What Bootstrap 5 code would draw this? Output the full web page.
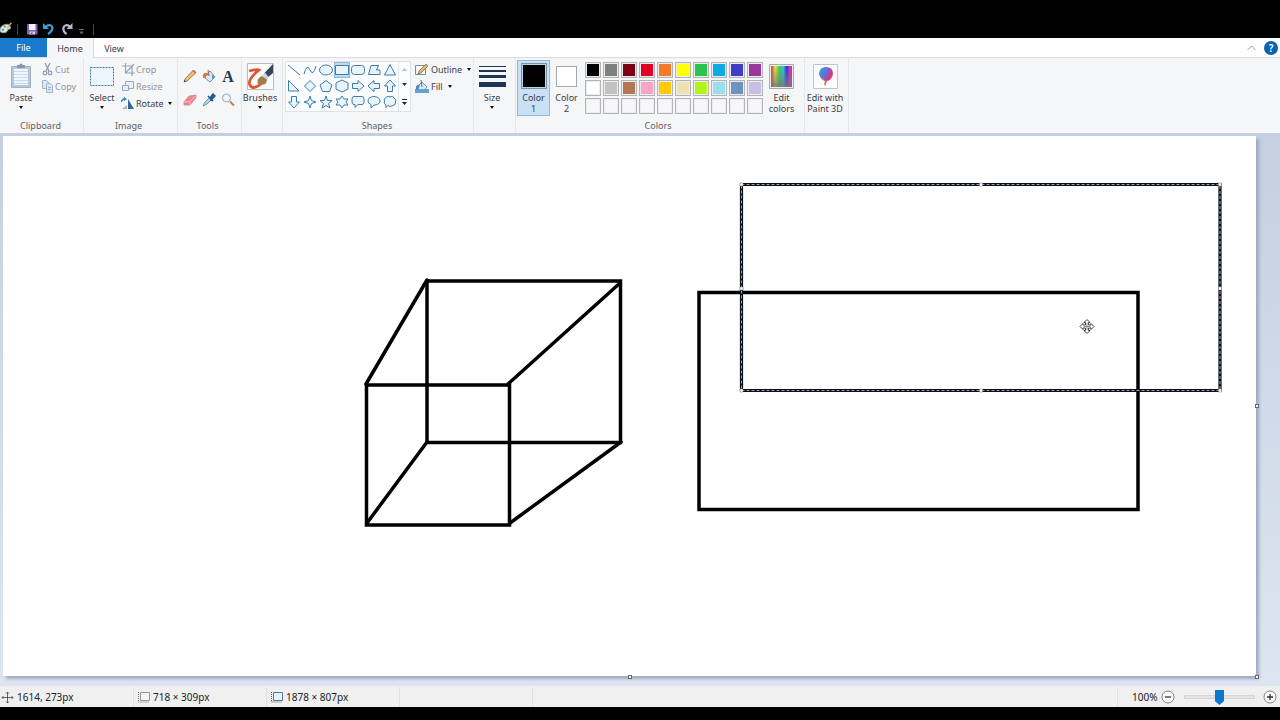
<!DOCTYPE html>
<html lang="en">
<head>
<meta charset="utf-8">
<meta name="viewport" content="width=device-width, initial-scale=1">
<title>Paint</title>
<link href="https://cdn.jsdelivr.net/npm/bootstrap@5.3.0/dist/css/bootstrap.min.css" rel="stylesheet">
<style>
  body { background: #000; font-family: "Noto Sans", "Open Sans", sans-serif; font-size: 9px; line-height: 11px; color: #3c3c44; }
  svg { display: block; flex: none; }
  button { border: 0; background: none; padding: 0; color: inherit; }
  .titlebar { height: 38px; padding-bottom: 3px; gap: 4px; }
  .titlebar .divider { width: 1px; height: 11px; background: #4a4a4a; }
  .titlebar .divider-first { margin-right: 4px; }
  .tabs { height: 20px; background: #fff; border-bottom: 1px solid #dadbdc; }
  .tabs .tab { color: #3c3c44; text-decoration: none; display: flex; align-items: center; justify-content: center; width: 47px; height: 20px; }
  .tabs .tab-file { background: #1979ca; color: #fff; height: 19px; }
  .tabs .tab-home { background: #f5f6f7; border-right: 1px solid #dadbdc; }
  .tabs .tab-view { width: 40px; }
  .tabs-end { padding-right: 2px; }
  .help { width: 14px; height: 14px; border-radius: 50%; background: #0a63b1; color: #fff; font-size: 10px; font-weight: 600; line-height: 14px; }
  .ribbon { background: #f5f6f8; min-height: 75px; }
  .tool-group { border-right: 1px solid #e6e7ea; display: flex; flex-direction: column; flex: none; padding-top: 2px; }
  .group-body { display: flex; height: 59px; }
  .group-title { text-align: center; color: #5f6068; line-height: 14px; padding-right: 2px; }
  .w-clip { width: 84px; } .w-image { width: 94px; } .w-tools { width: 64px; } .w-brush { width: 41px; }
  .w-shapes { width: 191px; } .w-size { width: 42px; } .w-colors { width: 289px; } .w-three { width: 44px; }
  .big { width: 36px; height: 56px; display: flex; flex-direction: column; align-items: center; padding-top: 2px; white-space: nowrap; }
  .w-clip .big { width: 42px; } .w-three .big { width: 40px; }
  .big .pic { height: 28px; display: flex; align-items: center; justify-content: center; margin-bottom: 2px; }
  .caret { display: inline-block; border: 2px solid transparent; border-top: 3px solid #111; border-bottom: 0; }
  .big .caret { margin-top: 3px; }
  .minors { padding-top: 1px; padding-left: 1px; }
  .minor { display: flex; align-items: center; gap: 1px; height: 17px; white-space: nowrap; }
  .minor .caret { margin-left: 3px; }
  .w-clip .minor { gap: 2px; } .w-shapes .minor { gap: 2px; }
  .off { color: #93949c; }
  .tool-grid { display: grid; grid-template-columns: repeat(3, 19px); grid-auto-rows: 24px; place-items: center; padding: 4px 2px; }
  .gallery { border: 1px solid #dfe2e6; background: #fbfcfd; height: 51px; margin: 1px 0 0 2px; }
  .shape-grid { display: grid; grid-template-columns: repeat(7, 16px); grid-auto-rows: 16px; }
  .shape-grid button { display: grid; place-items: center; }
  .shape-grid .picked { background: #bcdcf4; box-shadow: inset 0 0 0 1px #8ab8e0; }
  .shape-grid svg { fill: #eaf5fb; stroke: #3e7ca8; stroke-width: 1; }
  .shape-grid svg .open-shape { fill: none; }
  .scroller { width: 12px; border-left: 1px solid #e3e5e9; display: flex; flex-direction: column; justify-content: space-around; align-items: center; }
  .w-colors .color-btn { width: 33px; }
  .first-color { margin-left: 1px; }
  .active-color { background: #c9e0f5; box-shadow: inset 0 0 0 1px #8fb8dd; }
  .chip { border: 1px solid #a5a8ad; box-shadow: inset 0 0 0 1px #fff; background: #fff; }
  .chip-one { width: 26px; height: 26px; background: #000; box-shadow: inset 0 0 0 1px #b9d3ea; border-color: #7d8fa3; }
  .chip-two { width: 21px; height: 21px; }
  .palette { display: grid; grid-template-columns: repeat(10, 16px); grid-auto-rows: 16px; gap: 2px; padding: 2px 0 0 2px; align-content: start; width: 182px; }
  .palette button { border: 1px solid #b3b4b7; box-shadow: inset 0 0 0 1px #ececef; }
  .workspace { background: linear-gradient(#c5cfdf, #dde5f1); padding: 3px 24px 10px 3px; }
  .sheet { position: relative; background: #fff; box-shadow: 3px 3px 3px #9dabc0; }
  .sheet svg { width: 100%; height: auto; }
  .grip { position: absolute; width: 4px; height: 4px; border: 1px solid #666; background: #fff; }
  .grip-e { right: -3px; top: calc(50% - 2px); } .grip-s { left: calc(50% - 2px); bottom: -3px; } .grip-se { right: -3px; bottom: -3px; }
  .status { min-height: 21px; background: #f0f0f0; color: #222; font-size: 10px; padding-top: 1px; }
  .cell-info { width: 133px; height: 20px; border-right: 1px solid #e0e0e2; display: flex; align-items: center; gap: 3px; padding-left: 4px; flex: none; white-space: nowrap; }
  .cell-pos { width: 134px; padding-left: 1px; }
  .zoom { width: 163px; height: 20px; border-left: 1px solid #e0e0e2; padding-left: 14px; padding-right: 3px; }
  .zoom input { appearance: none; width: 71px; height: 16px; background: none; margin: 0 8px 0 9px; }
  .zoom input::-webkit-slider-runnable-track { height: 4px; background: #e4e4e6; border: 1px solid #d5d5d8; }
  .zoom input::-webkit-slider-thumb { appearance: none; width: 9px; height: 15px; margin-top: -6px; background: #0a78cc; clip-path: polygon(0 0, 100% 0, 100% 75%, 50% 100%, 0 75%); }
</style>
</head>
<body>
<div class="d-flex flex-column min-vh-100">
  <header class="titlebar d-flex align-items-end">
    <svg width="13" height="14" viewBox="0 0 14 14"><path d="M0 8Q2 3 8 3Q12 4 11 8Q8 8 8 10Q7 13 3 12Q-1 12 0 8Z" fill="#d9e6dc" stroke="#8a9c93"/><circle cx="3" cy="9" r="1.2" fill="#578ac0"/><circle cx="5" cy="5.500" r="1.200" fill="#61a75a"/><circle cx="8" cy="6" r="1.200" fill="#e4e07b"/><path d="M7 9L11 1l2 1Z" fill="#d29b57"/></svg>
    <span class="divider divider-first"></span>
    <button aria-label="Save"><svg width="12" height="12" viewBox="0 0 12 12"><path d="M1 1H11.500V11.500H1Z" fill="#7c5faf"/><path d="M3 1h6.500v6H3Z" fill="#f4f1fa"/><path d="M3.500 8.500h5.500v3H3.500Z" fill="#d5cae6"/><path d="M5 9.500h1.500v2H5Z" fill="#66489c"/></svg></button>
    <button aria-label="Undo"><svg width="14" height="13" viewBox="0 0 14 13"><path d="M4 4.500Q9 1.500 10.500 5.500Q10.500 9 6 12" fill="none" stroke="#39a0dc" stroke-width="2.200"/><path d="M1 1V7H7Z" fill="#39a0dc"/></svg></button>
    <button aria-label="Redo"><svg width="14" height="13" viewBox="0 0 14 13"><path d="M10 4.500Q5 1.500 3.500 5.500Q2.500 9 6.500 12" fill="none" stroke="#b9b9cd" stroke-width="2.200"/><path d="M12.500 1V7H6.500Z" fill="#b9b9cd"/></svg></button>
    <button aria-label="Customize toolbar"><svg width="7" height="10" viewBox="1 0 7 10"><path d="M2 4.500h5M3 7l1.500 2L6 7Z" stroke="#777" fill="none"/></svg></button>
    <span class="divider ms-1"></span>
  </header>

  <nav class="tabs d-flex">
    <a href="#" class="tab tab-file">File</a>
    <a href="#" class="tab tab-home">Home</a>
    <a href="#" class="tab tab-view">View</a>
    <div class="tabs-end ms-auto d-flex align-items-center">
      <button class="me-2" aria-label="Collapse ribbon"><svg width="9" height="6" viewBox="0 0 9 6"><path d="M.5 5L4.500 1L8.500 5" fill="none" stroke="#999"/></svg></button>
      <button class="help" aria-label="Help">?</button>
    </div>
  </nav>

  <main class="ribbon d-flex">
    <section class="tool-group w-clip">
      <div class="group-body">
        <button class="big"><span class="pic"><svg width="22" height="26" viewBox="0 0 22 26"><path d="M1.500 3.500h19v21h-19Z" fill="#b9c6d8" stroke="#a1b1c8"/><path d="M4 6h14v16H4Z" fill="#f1f6fc"/><path d="M4 8.500h14M4 11.500h14M4 14.500h14M4 17.500h14M4 20.500h14" stroke="#c9d8eb"/><path d="M7 2h2q2-3 4 0h2v3H7Z" fill="#8898ad"/></svg></span>Paste<span class="caret"></span></button>
        <div class="minors ps-0">
          <button class="minor off" disabled><svg width="11" height="13" viewBox="1 0 11 13"><g fill="none" stroke="#929caf" stroke-width="1.300"><path d="M4 0L8 8M9 0L5 8"/><circle cx="4" cy="10" r="1.800"/><circle cx="9" cy="10" r="1.800"/></g></svg>Cut</button>
          <button class="minor off" disabled><svg width="11" height="13" viewBox="1 0 11 13"><g fill="#dce6f2" stroke="#a3b4cb"><path d="M1.500 .5h4l2 2v6h-6Z"/><path d="M5.500 3.500h4l2 2v7h-6Z"/><path d="M7 7.500h3M7 9.500h3"/></g></svg>Copy</button>
        </div>
      </div>
      <div class="group-title">Clipboard</div>
    </section>

    <section class="tool-group w-image">
      <div class="group-body">
        <button class="big"><span class="pic"><svg width="24" height="19" viewBox="0 0 24 19"><path d="M.5 .5h23v18H.5Z" fill="#edf5fc" stroke="#3b7ca9" stroke-dasharray="2 1"/></svg></span>Select<span class="caret"></span></button>
        <div class="minors">
          <button class="minor off" disabled><svg width="14" height="13" viewBox="0 0 14 13"><path d="M4.500 0V10H14M1 3h10v10M4.500 10L13 1" fill="none" stroke="#94a4b9" stroke-width="1.200"/></svg>Crop</button>
          <button class="minor off" disabled><svg width="14" height="13" viewBox="0 0 14 13"><g fill="#e8eff7" stroke="#94a9c1"><path d="M4.500 1.500h8v7h-8Z"/><path d="M1.500 5.500h6v5h-6Z"/></g></svg>Resize</button>
          <button class="minor"><svg width="14" height="13" viewBox="0 0 14 13"><path d="M1 12L6 8V12Z" fill="#a7b3bf"/><path d="M7 12V2l6 10Z" fill="#346997"/><path d="M0 5Q1 2 4 2" fill="none" stroke="#2688cc" stroke-width="1.300"/><path d="M3 0l3 2-3 2Z" fill="#2688cc"/></svg>Rotate<span class="caret"></span></button>
        </div>
      </div>
      <div class="group-title pe-1">Image</div>
    </section>

    <section class="tool-group w-tools">
      <div class="group-body"><div class="tool-grid">
        <button aria-label="Pencil"><svg width="14" height="14" viewBox="0 0 14 14"><path d="M1 13L2 10L10.500 1L13 3.500L4 12Z" fill="#edc66c" stroke="#7d6340" stroke-width=".8"/><path d="M9.500 2l2.500 2.500 1-1-2.500-2.500Z" fill="#c86b61"/><path d="M1 13l.5-2L3 12.500Z" fill="#333"/></svg></button>
        <button aria-label="Fill with color"><svg width="14" height="14" viewBox="0 0 14 14"><path d="M4 6L8 2L13 8L8 13L3 9Z" fill="#dce9f1" stroke="#7891a4"/><path d="M7 7L6 1" stroke="#607384"/><path d="M1 9Q0 3 6 4L8 6Q3 6 3 9Z" fill="#d8743b"/><path d="M10 5l3 3-3 3Z" fill="#6497bb"/></svg></button>
        <button aria-label="Text"><svg width="14" height="14" viewBox="0 0 14 14"><text x="7" y="12.500" text-anchor="middle" font-family="Liberation Serif, serif" font-size="16" font-weight="bold" fill="#24384f">A</text></svg></button>
        <button aria-label="Eraser"><svg width="14" height="13" viewBox="0 0 14 13"><path d="M1 8L6 2L13 1L13 4L7 11L1 11Z" fill="#e88690" stroke="#c7818a" stroke-width=".7"/><path d="M1 8l6-.5 6-6M7 8v3" stroke="#fac0c2" fill="none"/></svg></button>
        <button aria-label="Color picker"><svg width="14" height="14" viewBox="0 0 14 14"><path d="M1 13L3 9L8 4L10 6L5 11Z" fill="#b4d6e6" stroke="#57819e" stroke-width=".8"/><path d="M6 3l5 5M8 5l3-4 2 2-4 4Z" fill="#296292" stroke="#235680" stroke-width="1.500"/></svg></button>
        <button aria-label="Magnifier"><svg width="14" height="14" viewBox="0 0 14 14"><circle cx="5.500" cy="5" r="4" fill="#edf6fd" stroke="#94a8bb"/><path d="M9 8.500l4 4" stroke="#bd884e" stroke-width="2"/></svg></button>
      </div></div>
      <div class="group-title pe-1">Tools</div>
    </section>

    <section class="tool-group w-brush">
      <div class="group-body"><button class="big"><span class="pic"><svg width="27" height="27" viewBox="0 0 27 27"><path d="M.5 .5h26v26H.5Z" fill="#fafcfd" stroke="#b5bac0"/><path d="M2 8Q10 6 12 7Q1 16 2.500 21Q5 28 14 21" fill="none" stroke="#dc572f" stroke-width="2.800"/><path d="M11 21Q9 16 14.500 13L20 16Q20 24 11 21Z" fill="#a87949"/><path d="M17 10.500L26 1v9l-6 5Z" fill="#34465b"/><path d="M15 12.500l3-3 4 5-2 2Z" fill="#cad5df"/></svg></span>Brushes<span class="caret"></span></button></div>
    </section>

    <section class="tool-group w-shapes">
      <div class="group-body">
        <div class="gallery d-flex">
          <div class="shape-grid" id="shapes"></div>
          <div class="scroller">
            <button aria-label="Scroll up"><svg width="5" height="3" viewBox="0 0 5 3"><path d="M0 3L2.500 0L5 3Z" fill="#bbb"/></svg></button>
            <button aria-label="Scroll down"><svg width="5" height="3" viewBox="0 0 5 3"><path d="M0 0H5L2.500 3Z" fill="#333"/></svg></button>
            <button aria-label="More shapes"><svg width="5" height="6" viewBox="0 0 5 6"><path d="M0 0H5V1H0ZM0 3H5L2.500 6Z" fill="#222"/></svg></button>
          </div>
        </div>
        <div class="minors ps-1">
          <button class="minor"><svg width="14" height="13" viewBox="0 0 14 13"><path d="M.5 2.500h10v9H.5Z" fill="#f8fbff" stroke="#7590a5"/><path d="M3 11l1-3 7-7 2 2-7 7Z" fill="#e5b75f" stroke="#80613b" stroke-width=".7"/></svg>Outline<span class="caret"></span></button>
          <button class="minor"><svg width="14" height="13" viewBox="0 0 14 13"><path d="M3 6L7 2l5 5-4 5-5-2Z" fill="#dce8f1" stroke="#718ca3"/><path d="M7 7L6 0" stroke="#667"/><path d="M0 9h14v4H0Z" fill="#60a3d7"/><path d="M1 10Q0 4 5 5L3 10Z" fill="#4a8fc1"/></svg>Fill<span class="caret"></span></button>
        </div>
      </div>
      <div class="group-title">Shapes</div>
    </section>

    <section class="tool-group w-size">
      <div class="group-body"><button class="big"><span class="pic"><svg width="27" height="23" viewBox="0 0 27 23"><path d="M0 1h27v1H0ZM0 5h27v2H0ZM0 10h27v3H0ZM0 17h27v5H0Z" fill="#1c3654"/></svg></span>Size<span class="caret"></span></button></div>
    </section>

    <section class="tool-group w-colors">
      <div class="group-body">
        <button class="big color-btn first-color active-color"><span class="pic"><span class="chip chip-one"></span></span><span>Color</span><span>1</span></button>
        <button class="big color-btn"><span class="pic"><span class="chip chip-two"></span></span><span>Color</span><span>2</span></button>
        <div class="palette" id="palette"></div>
        <button class="big color-btn"><span class="pic"><svg width="25" height="25" viewBox="0 0 25 25"><defs><linearGradient id="hue"><stop stop-color="#e93232"/><stop offset=".2" stop-color="#e8e83c"/><stop offset=".4" stop-color="#35d450"/><stop offset=".58" stop-color="#2bcbe2"/><stop offset=".75" stop-color="#3727dd"/><stop offset=".9" stop-color="#df2bdc"/><stop offset="1" stop-color="#df304c"/></linearGradient><linearGradient id="fade" x2="0" y2="1"><stop stop-color="#777" stop-opacity="0"/><stop offset="1" stop-color="#777" stop-opacity=".85"/></linearGradient></defs><path d="M.5 .5h24v24H.5Z" fill="#eee" stroke="#aaa"/><path d="M2 2h21v21H2Z" fill="url(#hue)"/><path d="M2 2h21v21H2Z" fill="url(#fade)"/></svg></span><span>Edit</span><span>colors</span></button>
      </div>
      <div class="group-title pe-1">Colors</div>
    </section>

    <section class="tool-group w-three">
      <div class="group-body"><button class="big"><span class="pic"><svg width="25" height="25" viewBox="0 0 25 25"><defs><linearGradient id="drop" x1="0" x2="1" y1=".2" y2=".8"><stop stop-color="#17a9ec"/><stop offset=".45" stop-color="#7763d6"/><stop offset=".75" stop-color="#d93576"/><stop offset="1" stop-color="#f19a31"/></linearGradient></defs><path d="M.5 .5h24v24H.5Z" fill="#fcfcfd" stroke="#c2c4c9"/><path d="M13 3Q20 3 20 10Q19 16 14 17L12 22Q11 20 12 17Q6 14 6 9Q7 3 13 3Z" fill="url(#drop)"/><path d="M8 14Q11 14 12 17L14 16L12 22Q11 20 12 17Q9 16 8 14Z" fill="#ee7b32"/></svg></span><span>Edit with</span><span>Paint 3D</span></button></div>
    </section>
  </main>

  <div class="workspace">
    <div class="sheet">
      <svg viewBox="3 136 1253 540" role="img" aria-label="Drawing of a cube and two rectangles">
        <g fill="none" stroke="#000" stroke-width="3.500" stroke-linecap="round">
          <path d="M427 281H620.500V442.500H427ZM366.500 385H509.500V525H366.500Z"/>
          <path d="M427 280L366 384M620 283L508 384M427 442L367 523M621 442L510 523"/>
          <path d="M699 292.500H1138V509.500H699Z"/>
          <path d="M741.500 184.500H1220V390.500H741.500Z" stroke-width="3.200" stroke="#0a1018"/>
        </g>
        <path d="M741.500 184.500H1220V390.500H741.500Z" fill="none" stroke="#98a2a8" stroke-dasharray="3 2"/>
        <path d="M740 183h3v3h-3ZM979.500 183h3v3h-3ZM1218.500 183h3v3h-3ZM740 287h3v3h-3ZM1218.500 287h3v3h-3ZM740 389h3v3h-3ZM979.500 389h3v3h-3ZM1218.500 389h3v3h-3Z" fill="#fff" stroke="#777" stroke-width=".5"/>
        <path d="M1087 319.500l3 3h-1.500v2.500h2.500v-1.500l3 3-3 3v-1.500h-2.500v2.500h1.500l-3 3-3-3h1.500v-2.500h-2.500v1.500l-3-3 3-3v1.500h2.500v-2.500h-1.500Z" fill="#fff" stroke="#333" stroke-width=".9"/>
        <path d="M1087 323v7M1083.500 326.500h7" stroke="#888"/>
      </svg>
      <span class="grip grip-e"></span><span class="grip grip-s"></span><span class="grip grip-se"></span>
    </div>
  </div>

  <footer class="status d-flex align-items-center">
    <div class="cell-info cell-pos"><svg width="13" height="13" viewBox="0 0 13 13"><path d="M6.500 1v11M1 6.500h11M5 2.500L6.500 1L8 2.500M5 10.500L6.500 12L8 10.500M2.500 5L1 6.500L2.500 8M10.500 5L12 6.500L10.500 8" fill="none" stroke="#444" stroke-width=".8"/></svg>1614, 273px</div>
    <div class="cell-info ps-1"><svg width="12" height="12" viewBox="0 0 12 12"><path d="M2.500 1.500h9v8h-9Z" fill="#f7f7f8" stroke="#9699a0"/><path d="M.5 1v10H11" fill="none" stroke="#777" stroke-dasharray="1 1"/></svg>718 × 309px</div>
    <div class="cell-info ps-1"><svg width="12" height="12" viewBox="0 0 12 12"><path d="M2.500 1.500h9v8h-9Z" fill="#e4f4fb" stroke="#557991"/><path d="M.5 1v10H11" fill="none" stroke="#555" stroke-dasharray="1 1"/></svg>1878 × 807px</div>
    <div class="cell-info"></div>
    <div class="zoom ms-auto d-flex align-items-center justify-content-between">
      <label for="zoom">100%</label>
      <div class="d-flex align-items-center">
        <button aria-label="Zoom out"><svg width="14" height="14" viewBox="0 0 14 14"><circle cx="7" cy="7" r="6" fill="#fafafa" stroke="#777" stroke-width=".9"/><path d="M4 7h6" stroke="#333" stroke-width="1.300"/></svg></button>
        <input type="range" id="zoom" min="0" max="100" value="50">
        <button aria-label="Zoom in"><svg width="14" height="14" viewBox="0 0 14 14"><circle cx="7" cy="7" r="6" fill="#fafafa" stroke="#777" stroke-width=".9"/><path d="M4 7h6M7 4v6" stroke="#333" stroke-width="1.300"/></svg></button>
      </div>
    </div>
  </footer>
</div>
<script src="https://cdn.jsdelivr.net/npm/bootstrap@5.3.0/dist/js/bootstrap.bundle.min.js"></script>
<script>
  const colors = ['#000000','#7f7f7f','#7d0016','#e00025','#f57a28','#ffff00','#2bc34c','#0cabe2','#3f3ec4','#9a379b',
                  '#ffffff','#c3c3c3','#b57753','#fba3c7','#ffc90e','#efe4b0','#b5f51d','#99e0ec','#7092be','#c8bfe7'];
  document.getElementById('palette').innerHTML = Array.from({ length: 30 }, (_, i) =>
    `<button aria-label="Palette ${i + 1}" style="background:${colors[i] || '#f7f7fa'}"></button>`).join('');

  const shapes = [
    ['Line', 'M1 2L13 12'], ['Curve', 'M1 11Q4 0 7 7T13 3'], ['Oval', 'M.5 7a6.500 5 0 1 1 13 0a6.500 5 0 1 1-13 0Z'],
    ['Rectangle', 'M.5 2.500h13v9H.5Z'], ['Rounded rectangle', 'M3.500 2.500h7q3 0 3 3v3q0 3-3 3h-7q-3 0-3-3v-3q0-3 3-3Z'],
    ['Polygon', 'M1.500 11.500L4 2.500H11.500L9.500 7H13V11.500Z'], ['Triangle', 'M7 1.500L12.500 12H1.500Z'],
    ['Right triangle', 'M1.500 1.500V12H12Z'], ['Diamond', 'M7 1.500L12.500 7L7 12.500L1.500 7Z'], ['Pentagon', 'M7 1.500L13 6L10.500 12.500H3.500L1 6Z'],
    ['Hexagon', 'M7 1L13 4V10L7 13L1 10V4Z'], ['Right arrow', 'M1.500 4.500H7V1.500L13 7L7 12.500V9.500H1.500Z'],
    ['Left arrow', 'M12.500 4.500H7V1.500L1 7L7 12.500V9.500H12.500Z'], ['Up arrow', 'M4.500 12.500V7H1.500L7 1L12.500 7H9.500V12.500Z'],
    ['Down arrow', 'M4.500 1.500V7H1.500L7 13L12.500 7H9.500V1.500Z'], ['Four-point star', 'M7 1L8.500 5.500L13 7L8.500 8.500L7 13L5.500 8.500L1 7L5.500 5.500Z'],
    ['Five-point star', 'M7 1L8.500 5.500H13L9.500 8.500L11 13L7 10.500L3 13L4.500 8.500L1 5.500H5.500Z'],
    ['Six-point star', 'M7 1L9 4H13L11 7L13 10H9L7 13L5 10H1L3 7L1 4H5Z'],
    ['Rounded callout', 'M3 1.500H11Q13 1.500 13 4V7Q13 9.500 11 9.500H7L4 12.500V9.500H3Q1 9.500 1 7V4Q1 1.500 3 1.500Z'],
    ['Oval callout', 'M4 9.500Q1 8.500 1 6Q1 2 7 1.500Q13 2 13 6Q12.500 10 7 10L4 13Z'],
    ['Cloud callout', 'M3 2.500Q5 0 7 2Q10 0 11 3Q14 4 12.500 7Q13 10 10 10.500Q7 12.500 5 10.500L3 12.500V10Q0 8.500 1.500 6Q0 4 3 2.500Z']
  ];
  document.getElementById('shapes').innerHTML = shapes.map(([name, d], i) =>
    `<button aria-label="${name}"${i === 3 ? ' class="picked"' : ''}><svg width="14" height="14" viewBox="0 0 14 14"><path d="${d}"${i < 2 ? ' class="open-shape"' : ''}/></svg></button>`).join('');
</script>
</body>
</html>
